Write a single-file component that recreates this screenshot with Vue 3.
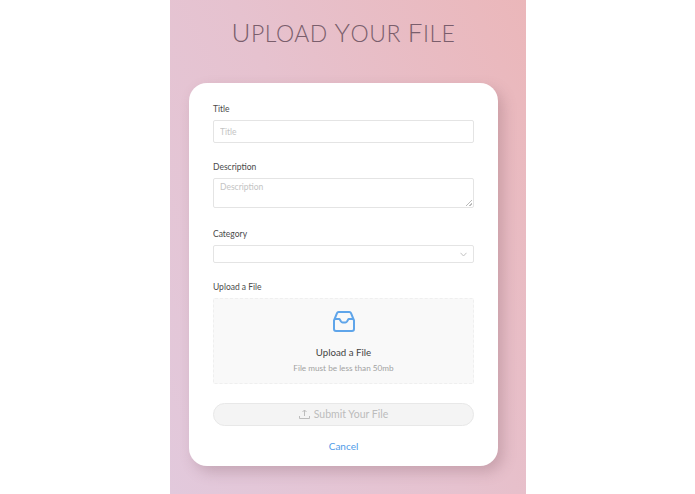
<template>
  <div class="page">
    <div class="panel">
      <h1 class="title"><span>U</span>pload <span>Y</span>our <span>F</span>ile</h1>

      <form class="card" @submit.prevent>
        <div class="field">
          <label>Title</label>
          <input class="box" type="text" placeholder="Title" />
        </div>

        <div class="field field-desc">
          <label>Description</label>
          <textarea class="box" placeholder="Description"></textarea>
        </div>

        <div class="field field-cat">
          <label>Category</label>
          <div class="box select">
            <svg width="7" height="5" viewBox="0 0 7 5">
              <path d="M.5.8 3.500 4 6.500.8" fill="none" stroke="#c2c2c2" stroke-width="1" />
            </svg>
          </div>
        </div>

        <div class="field field-file">
          <label>Upload a File</label>
          <div class="drop">
            <svg class="tray" width="22" height="21" viewBox="0 0 22 21">
              <path
                d="M1 9.500 4 2.200Q4.400 1 5.600 1h10.800Q17.600 1 18 2.200L21 9.500V18q0 2-2 2H3q-2 0-2-2ZM1 8h5.500L8 10.500q.6.900 1.600.900h2.800q1 0 1.600-.9L15.500 8H21"
                fill="none"
                stroke="#5fa5ea"
                stroke-width="2"
                stroke-linejoin="round"
              />
            </svg>
            <div class="drop-title">Upload a File</div>
            <div class="drop-note">File must be less than 50mb</div>
          </div>
        </div>

        <button class="submit" type="button" disabled>
          <svg width="11" height="10" viewBox="0 0 11 10">
            <path d="M5.500 7V1M3.500 3 5.500 1l2 2M.5 7v2.500h10V7" fill="none" stroke="#bdbdbd" stroke-width="1" />
          </svg>
          Submit Your File
        </button>
        <a class="cancel" href="#" @click.prevent>Cancel</a>
      </form>
    </div>
  </div>
</template>

<script setup>
</script>

<style>
html,
body {
  margin: 0;
  background: #fff;
}
</style>

<style scoped>
.page {
  display: flex;
  justify-content: center;
  height: 494px;
  overflow: hidden;
  padding-left: 1px;
  box-sizing: border-box;
  font-family: Lato, "Noto Sans", sans-serif;
}
.panel {
  width: 356px;
  height: 494px;
  background: linear-gradient(65deg, #e2c9dc 0%, #e6c2cf 50%, #ebb7ba 100%);
  padding: 0 28px 0 19px;
  box-sizing: border-box;
}
.title {
  margin: 0;
  padding-top: 14px;
  height: 83px;
  box-sizing: border-box;
  text-align: center;
  font-family: Lato, sans-serif;
  font-weight: 300;
  font-size: 23px;
  line-height: 36px;
  text-transform: uppercase;
  letter-spacing: 0.5px;
  color: #7a5e6c;
}
.title span {
  font-size: 26px;
}
.card {
  width: 309px;
  height: 383px;
  background: #fff;
  border-radius: 18px;
  box-shadow: 5px 6px 14px rgba(120, 80, 90, 0.28);
  padding: 20px 24px 0;
  box-sizing: border-box;
  display: flex;
  flex-direction: column;
}
.field {
  display: flex;
  flex-direction: column;
}
.field label {
  font-size: 8.500px;
  line-height: 12px;
  color: #4a4a4a;
  margin-bottom: 5px;
}
.box {
  display: block;
  width: 100%;
  box-sizing: border-box;
  border: 1px solid #e4e4e4;
  border-radius: 2px;
  background: #fff;
  font-family: inherit;
  font-size: 8.500px;
  color: #444;
  padding: 0 6px;
  outline: none;
}
.box::placeholder {
  color: #c4c4c4;
}
.field input {
  height: 23px;
}
.field-desc {
  margin-top: 18px;
}
.field-desc textarea {
  height: 30px;
  padding-top: 2px;
  resize: vertical;
  line-height: 12px;
}
.field-desc textarea::-webkit-resizer {
  background: linear-gradient(135deg, transparent 50%, #bbb 50%, #bbb 62%, transparent 62%, transparent 74%, #bbb 74%, #bbb 86%, transparent 86%) right 1px bottom 1px / 7px 7px no-repeat;
}
.field-cat {
  margin-top: 20px;
}
.select {
  height: 18px;
  display: flex;
  align-items: center;
  justify-content: flex-end;
  padding-right: 6px;
}
.field-file {
  margin-top: 18px;
}
.drop {
  height: 86px;
  border: 1px dashed #efefef;
  border-radius: 2px;
  background: #f9f9f9;
  box-sizing: border-box;
  display: flex;
  flex-direction: column;
  align-items: center;
  padding-top: 12px;
}
.tray {
  display: block;
}
.drop-title {
  margin-top: 13px;
  font-size: 9.700px;
  line-height: 14px;
  color: #444;
}
.drop-note {
  margin-top: 3px;
  font-size: 8.200px;
  line-height: 12px;
  color: #a2a2a2;
}
.submit {
  margin-top: 19px;
  height: 23px;
  border: 1px solid #e8e8e8;
  border-radius: 12px;
  background: #f4f4f4;
  color: #bcbcbc;
  font-family: inherit;
  font-size: 10.500px;
  font-weight: 400;
  display: flex;
  align-items: center;
  justify-content: center;
  gap: 4px;
  padding: 0 0 2px;
}
.cancel {
  margin-top: 13px;
  text-align: center;
  font-size: 10px;
  line-height: 14px;
  color: #4f9be8;
  text-decoration: none;
}
</style>
